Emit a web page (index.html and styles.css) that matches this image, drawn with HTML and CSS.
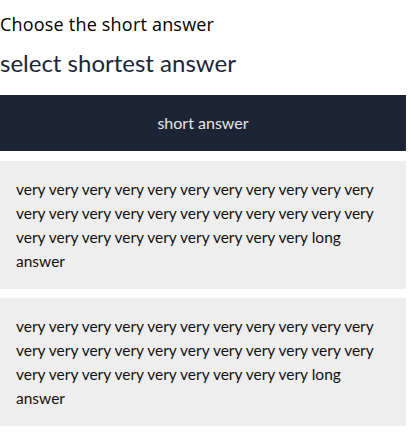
FILE: index.html
```html
<!DOCTYPE html>
<html>
<head>
<meta charset="utf-8">
<link rel="stylesheet" href="styles.css">
</head>
<body>
<div class="quiz">
  <h1 class="title">Choose the short answer</h1>
  <p class="prompt">select shortest answer</p>
  <div class="answers">
    <button class="answer selected">short answer</button>
    <button class="answer">very very very very very very very very very very very very very very very very very very very very very very very very very very very very very very very long answer</button>
    <button class="answer">very very very very very very very very very very very very very very very very very very very very very very very very very very very very very very very long answer</button>
  </div>
</div>
</body>
</html>
```
FILE: styles.css
```css
html, body {
  margin: 0;
  padding: 0;
  background: #ffffff;
}
.quiz {
  width: 406px;
  font-family: Lato, "Liberation Sans", sans-serif;
}
.title {
  margin: 0;
  padding-top: 13px;
  font-family: "Open Sans", "Liberation Sans", sans-serif;
  font-weight: 500;
  font-size: 18px;
  line-height: 22px;
  letter-spacing: 0.2px;
  color: #000000;
}
.prompt {
  margin: 0;
  padding-top: 13px;
  font-size: 24px;
  line-height: 30px;
  color: #1c2536;
}
.answers {
  display: flex;
  flex-direction: column;
  gap: 9px;
  margin-top: 17px;
}
.answer {
  display: block;
  width: 100%;
  border: none;
  margin: 0;
  text-align: left;
  font-family: Lato, "Liberation Sans", sans-serif;
  font-size: 15.5px;
  line-height: 24px;
  padding: 16px 16px;
  background: #eeeeee;
  color: #111111;
}
.answer.selected {
  height: 56px;
  margin-bottom: 1px;
  text-align: center;
  font-size: 16px;
  background: #1c2536;
  color: #e6e6e6;
}
```
